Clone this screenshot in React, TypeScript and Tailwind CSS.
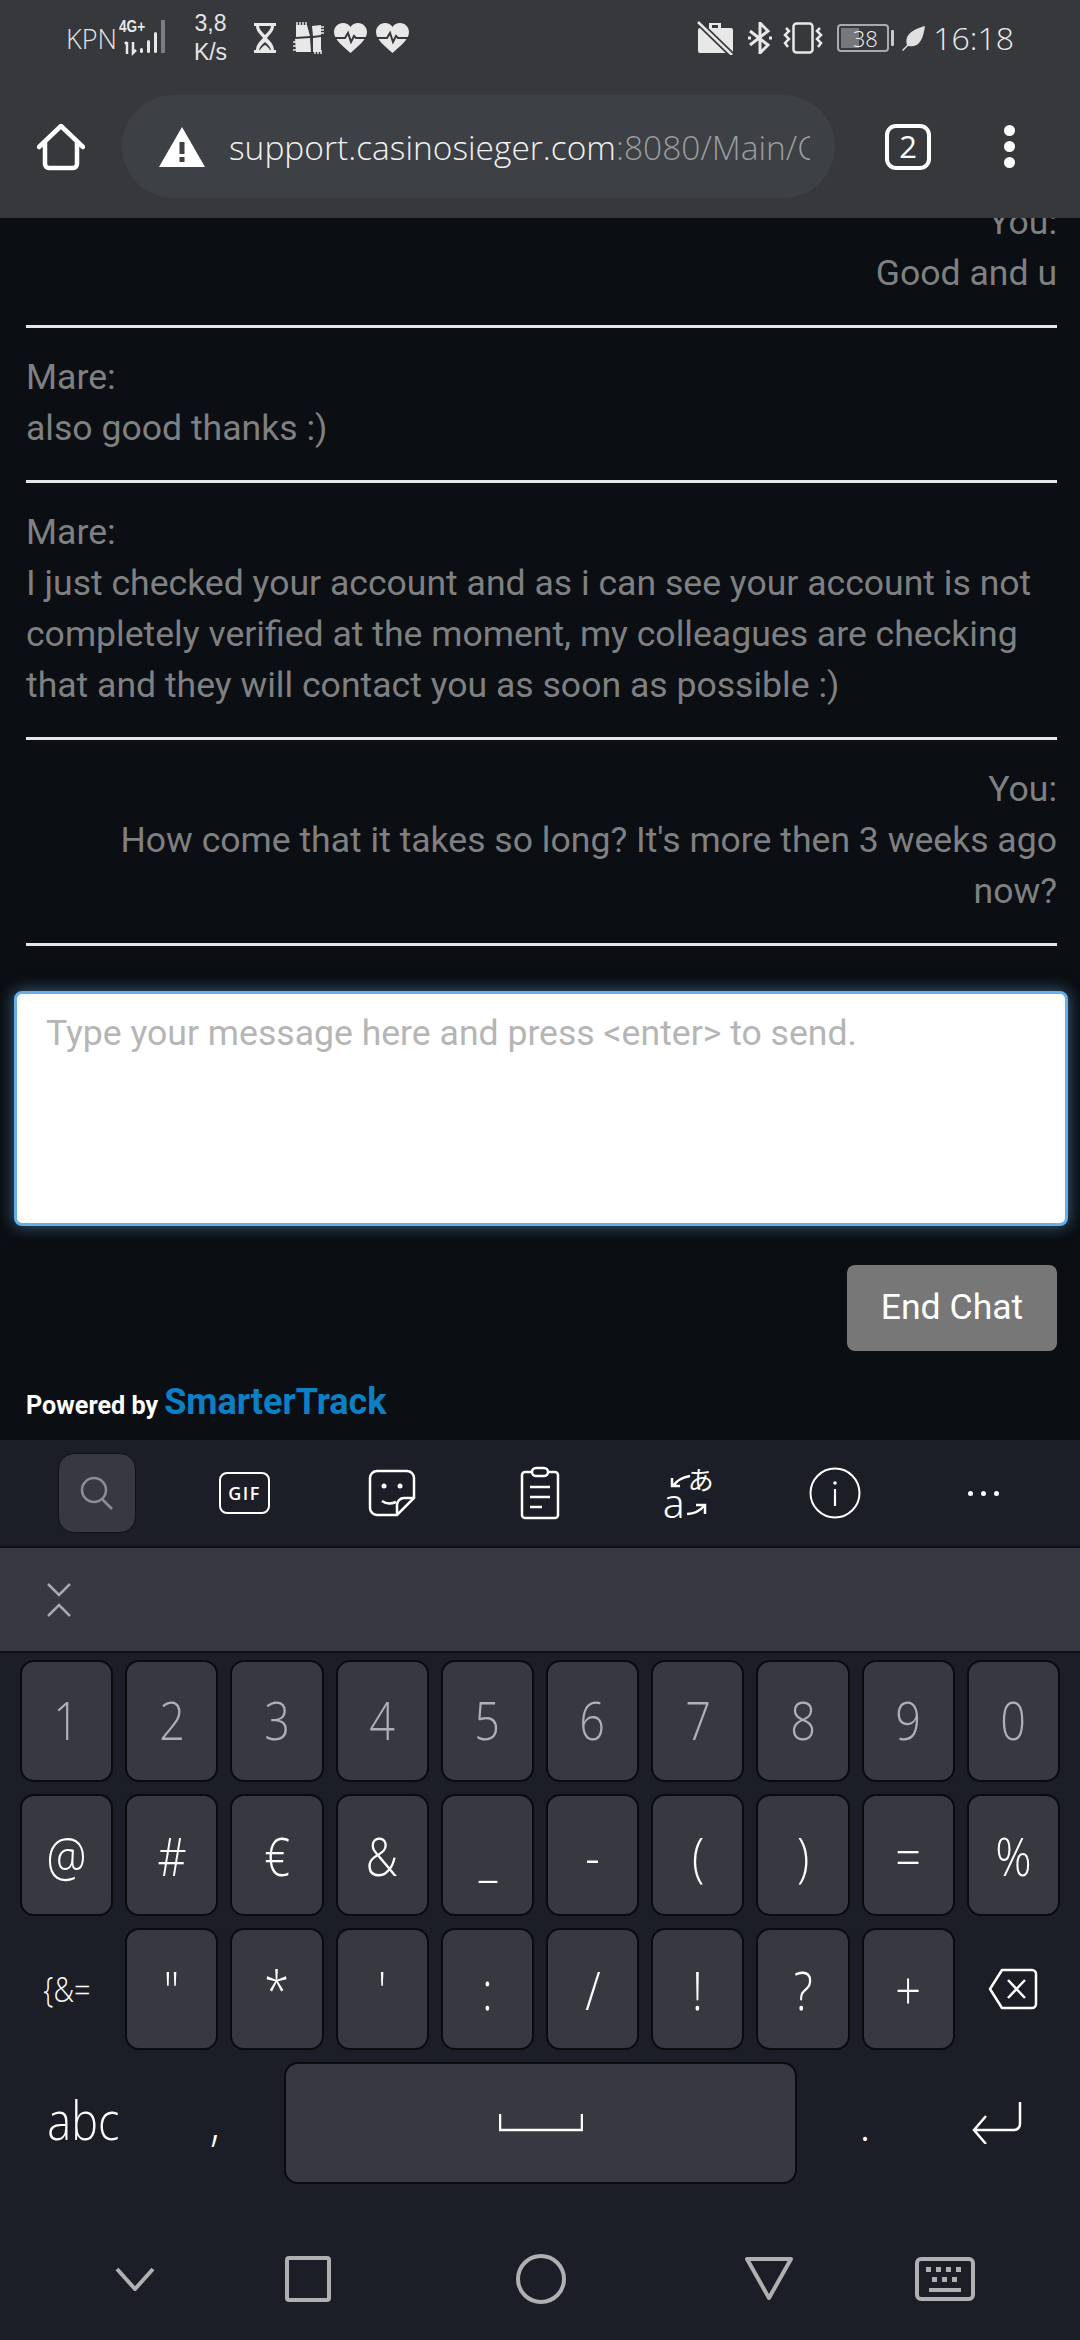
import React from "react"

const row1 = ["1", "2", "3", "4", "5", "6", "7", "8", "9", "0"]
const row2 = ["@", "#", "€", "&", "_", "-", "(", ")", "=", "%"]
const row3 = ['"', "*", "'", ":", "/", "!", "?", "+"]

function Hourglass() {
  return (
    <svg width="24" height="32" viewBox="0 0 24 32" className="ml-[24px]">
      <path d="M1 1h22v3h-2c0 5-4 8-7 12 3 3 7 7 7 12h2v3H1v-3h2c0-5 4-9 7-12C7 12 3 9 3 4H1z" fill="#e8e8e8" />
      <path d="M6 4h12c0 3-3 6-6 9-3-3-6-6-6-9zM12 20c2 2 5 4 6 8H6c1-4 4-6 6-8z" fill="#37383c" />
      <path d="M12 23c2 1 4 3 5 5H7c1-2 3-4 5-5z" fill="#e8e8e8" />
    </svg>
  )
}

function Patchwork() {
  return (
    <svg width="31" height="32" viewBox="0 0 31 32" className="ml-[16px]">
      <path d="M3 3h11l3 11-14 1zM19 4l9-1v10l-8 1zM2 17l15-1 1 14H3zM20 16l8-1v15h-8z" fill="#e8e8e8" />
      <path d="M4 0v3M7 0v3M10 0v3M13 0v3M27 5h4M27 8h4M27 11h4M22 28v4M25 28v4M28 28v4M0 20h3M0 24h3M0 28h3" stroke="#e8e8e8" strokeWidth="1.500" />
    </svg>
  )
}

function Heart({ first }: { first?: boolean }) {
  return (
    <svg width="33" height="30" viewBox="0 0 33 30" className={first ? "ml-[10px]" : "ml-[9px]"}>
      <path d="M16.500 30C10 24 0 17 0 9c0-5 4-9 9-9 3 0 6 1.500 7.500 4C18 1.500 21 0 24 0c5 0 9 4 9 9 0 8-10 15-16.500 21z" fill="#e8e8e8" />
      <path d="M0 15h11l3-5 3 9 3-6 2 2h11" fill="none" stroke="#37383c" strokeWidth="2" />
    </svg>
  )
}

function StatusLeft() {
  return (
    <div className="flex items-center pl-[66px]">
      <span className="font-['Open_Sans',sans-serif] font-light text-[27px] leading-none text-[#e4e4e4] w-[52px]">KPN</span>
      <div className="relative w-[56px] h-[36px]">
        <span className="absolute left-[1px] -top-[2px] origin-left scale-x-[0.8] font-['Liberation_Sans',sans-serif] font-bold text-[17px] leading-[17px] text-[#e8e8e8]">4G+</span>
        <svg width="56" height="36" viewBox="0 0 56 36" className="absolute left-0 top-0">
          <path d="M9 22v12M7 24l2-2" stroke="#e8e8e8" strokeWidth="2.500" fill="none" />
          <path d="M15 22v11l3-3" stroke="#e8e8e8" strokeWidth="2.500" fill="none" />
          <rect x="22" y="28" width="3" height="5" rx="1.500" fill="#e8e8e8" />
          <rect x="29" y="20" width="3" height="13" rx="1.500" fill="#e8e8e8" />
          <rect x="36" y="12" width="3" height="21" rx="1.500" fill="#e8e8e8" />
          <rect x="43" y="0" width="4" height="33" fill="#7b7c80" />
        </svg>
      </div>
      <div className="ml-[18px] w-[37px] flex flex-col items-center font-['Liberation_Sans',sans-serif] text-[23px] leading-[29px] text-[#e4e4e4]">
        <span>3,8</span>
        <span>K/s</span>
      </div>
      <Hourglass />
      <Patchwork />
      <Heart first />
      <Heart />
    </div>
  )
}

function StatusRight() {
  return (
    <div className="flex items-center pr-[66px]">
      <svg width="37" height="34" viewBox="0 0 37 34">
        <path d="M12 7V2h12v5h10a2 2 0 0 1 2 2v23H3a2 2 0 0 1-2-2V9a2 2 0 0 1 2-2z" fill="#e8e8e8" />
        <path d="M15 7V4h6v3z" fill="#37383c" />
        <path d="M1 1l34 33" stroke="#37383c" strokeWidth="6" />
        <path d="M1 1l34 33" stroke="#e8e8e8" strokeWidth="2.500" />
      </svg>
      <svg width="26" height="32" viewBox="0 0 26 32" className="ml-[13px]">
        <path d="M3 9l18 14-8 8V1l8 8L3 23" fill="none" stroke="#e8e8e8" strokeWidth="3" />
        <path d="M1 16h3M22 16h3" stroke="#e8e8e8" strokeWidth="3" />
      </svg>
      <svg width="40" height="32" viewBox="0 0 40 32" className="ml-[10px]">
        <rect x="10.500" y="1.500" width="19" height="29" rx="3" fill="none" stroke="#e8e8e8" strokeWidth="2.500" />
        <path d="M3 6l3 3-4 4 4 4-4 4 3 4M37 6l-3 3 4 4-4 4 4 4-3 4" fill="none" stroke="#e8e8e8" strokeWidth="2.500" />
      </svg>
      <div className="ml-[14px] relative w-[52px] h-[28px] rounded-[4px] border-2 border-[#a9aaac] flex items-center justify-center overflow-hidden">
        <div className="absolute left-[2px] top-[2px] bottom-[2px] w-[18px] bg-[#77787b]"></div>
        <span className="relative font-['Open_Sans',sans-serif] font-light text-[22px] leading-none text-[#f0f0f0] pl-[4px]">38</span>
      </div>
      <div className="ml-[2px] w-[3px] h-[16px] rounded-[1px] bg-[#c9c9c9]"></div>
      <svg width="23" height="25" viewBox="0 0 23 25" className="ml-[8px]">
        <path d="M23 0C21 14 17 22 6 20L1 25 0 24l5-5C2 8 12 3 23 0z" fill="#e0e0e0" />
      </svg>
      <span className="ml-[8px] font-['Open_Sans',sans-serif] font-light text-[32px] leading-none text-[#ececec]">16:18</span>
    </div>
  )
}

function BrowserBar() {
  return (
    <div className="flex items-center h-[103px]">
      <svg width="48" height="48" viewBox="0 0 48 48" className="ml-[37px]">
        <path d="M2 24L24 3l22 21M8 19v22a4 4 0 0 0 4 4h24a4 4 0 0 0 4-4V19" fill="none" stroke="#fff" strokeWidth="4.500" strokeLinejoin="round" strokeLinecap="round" />
      </svg>
      <div className="ml-[37px] w-[713px] h-[103px] rounded-full bg-[#3d4044] flex items-center pl-[37px]">
        <svg width="46" height="40" viewBox="0 0 46 40">
          <path d="M23 0l23 40H0z" fill="#fff" />
          <path d="M20.500 15h5v12h-5zM20.500 30h5v5h-5z" fill="#3d4044" />
        </svg>
        <div className="ml-[24px] w-[581px] overflow-hidden whitespace-nowrap font-['Open_Sans',sans-serif] text-[33.5px] leading-[50px] font-light text-[#f2f2f2]">
          support.casinosieger.com<span className="text-[#9a9c9e]">:8080/Main/Chat</span>
        </div>
      </div>
      <div className="ml-[50px] w-[46px] h-[46px] rounded-[11px] border-[4px] border-white flex items-center justify-center font-['Open_Sans',sans-serif] text-[31px] leading-none text-white">2</div>
      <div className="ml-[73px] flex flex-col gap-[5px]">
        <div className="w-[11px] h-[11px] rounded-full bg-white"></div>
        <div className="w-[11px] h-[11px] rounded-full bg-white"></div>
        <div className="w-[11px] h-[11px] rounded-full bg-white"></div>
      </div>
    </div>
  )
}

function Message({ you, children }: { you?: boolean; children: React.ReactNode }) {
  return (
    <div className={you ? "pl-[80px] pb-[26px] border-b-[3px] border-[#e6e6e6] mb-[24px] text-right" : "pb-[26px] border-b-[3px] border-[#e6e6e6] mb-[24px]"}>
      {children}
    </div>
  )
}

function Chat() {
  return (
    <div className="relative h-[1222px] overflow-hidden bg-[#0b0e12] font-['Roboto',sans-serif]">
      <div className="pl-[26px] pr-[23px] -mt-[21px] text-[35.6px] leading-[51px] text-[#7f8082]">
        <Message you>
          <div>You:</div>
          <div>Good and u</div>
        </Message>
        <Message>
          <div>Mare:</div>
          <div>also good thanks :)</div>
        </Message>
        <Message>
          <div>Mare:</div>
          <div>I just checked your account and as i can see your account is not completely verified at the moment, my colleagues are checking that and they will contact you as soon as possible :)</div>
        </Message>
        <Message you>
          <div>You:</div>
          <div>How come that it takes so long? It's more then 3 weeks ago now?</div>
        </Message>
      </div>
      <textarea
        readOnly
        placeholder="Type your message here and press <enter> to send."
        className="block mx-[14px] mt-[45px] w-[1054px] h-[235px] resize-none rounded-[8px] border-[3px] border-[#66afe9] bg-white px-[29px] py-[14px] text-[35.6px] leading-[51px] placeholder:text-[#b5b5b5] shadow-[0_0_16px_rgba(102,175,233,0.55)] outline-none"
      />
      <div className="flex justify-end pr-[23px] mt-[39px]">
        <div className="w-[210px] h-[86px] rounded-[8px] bg-[#777777] flex items-center justify-center text-[35.6px] text-white">End Chat</div>
      </div>
      <div className="flex items-baseline pl-[26px] mt-[24px]">
        <span className="text-[25.2px] font-bold text-white">Powered by</span>
        <span className="ml-[6px] text-[36px] font-bold text-[#0c80c5]">SmarterTrack</span>
      </div>
    </div>
  )
}

function Toolbar() {
  const stroke = "#ffffff"
  return (
    <div className="grid grid-cols-7 h-[108px] px-[23px] items-center justify-items-center bg-[#1b1e27] border-b-[2px] border-[#0e0f14]">
      <div className="w-[78px] h-[80px] rounded-[16px] border border-[#101116] bg-[#383940] flex items-center justify-center">
        <svg width="34" height="34" viewBox="0 0 34 34">
          <circle cx="14" cy="14" r="12" fill="none" stroke="#8d8e93" strokeWidth="2.500" />
          <path d="M22 23l10 10" stroke="#8d8e93" strokeWidth="2.500" />
        </svg>
      </div>
      <div className="w-[51px] h-[42px] rounded-[8px] border-[2.5px] border-white flex items-center justify-center font-['Open_Sans',sans-serif] font-semibold text-[18px] tracking-[1.5px] leading-none text-white">GIF</div>
      <svg width="48" height="48" viewBox="0 0 48 48">
        <path d="M29 46H9a7 7 0 0 1-7-7V9a7 7 0 0 1 7-7h30a7 7 0 0 1 7 7v20z" fill="none" stroke={stroke} strokeWidth="2.500" />
        <path d="M29 46V36a7 7 0 0 1 7-7h10" fill="none" stroke={stroke} strokeWidth="2.500" />
        <circle cx="16" cy="17" r="2.500" fill={stroke} />
        <circle cx="32" cy="17" r="2.500" fill={stroke} />
        <path d="M14 32c4 3 9 3 14 1" fill="none" stroke={stroke} strokeWidth="2.500" />
      </svg>
      <svg width="40" height="54" viewBox="0 0 40 54">
        <path d="M12 6H5a3 3 0 0 0-3 3v40a3 3 0 0 0 3 3h30a3 3 0 0 0 3-3V9a3 3 0 0 0-3-3h-7" fill="none" stroke={stroke} strokeWidth="2.500" />
        <rect x="12" y="2" width="16" height="8" rx="4" fill="none" stroke={stroke} strokeWidth="2.500" />
        <path d="M10 21h20M10 31h20M10 41h12" stroke={stroke} strokeWidth="2.500" />
      </svg>
      <div className="relative w-[52px] h-[52px] text-white">
        <span className="absolute right-[0px] -top-[4px] font-['Noto_Sans_CJK_JP',sans-serif] text-[26px] leading-[32px]">あ</span>
        <span className="absolute left-[1px] bottom-[-4px] text-[41px] leading-[41px] font-['Noto_Sans',sans-serif] font-light">a</span>
        <svg width="52" height="52" viewBox="0 0 52 52" className="absolute left-0 top-0">
          <path d="M28 9c-6 1-13 4-17 10M10 11v8h8M25 47c7 0 13-3 18-9M34 38h9v9" fill="none" stroke={stroke} strokeWidth="2.500" />
        </svg>
      </div>
      <svg width="52" height="52" viewBox="0 0 52 52">
        <circle cx="26" cy="26" r="24.500" fill="none" stroke={stroke} strokeWidth="2" />
        <circle cx="26" cy="16" r="1.800" fill={stroke} />
        <path d="M26 22v17" stroke={stroke} strokeWidth="2.200" />
      </svg>
      <div className="flex gap-[8px]">
        <div className="w-[5px] h-[5px] rounded-full bg-white"></div>
        <div className="w-[5px] h-[5px] rounded-full bg-white"></div>
        <div className="w-[5px] h-[5px] rounded-full bg-white"></div>
      </div>
    </div>
  )
}

function Key({ label, dim }: { label: string; dim?: boolean }) {
  return (
    <div className={dim
      ? "h-[122px] pb-[4px] rounded-[14px] border-2 border-[#0a0b0f] bg-[#383940] flex items-center justify-center font-['Open_Sans',sans-serif] font-light text-[53px] leading-none text-[#aeb0b4]"
      : "h-[122px] rounded-[14px] border-2 border-[#0a0b0f] bg-[#383940] flex items-center justify-center font-['Open_Sans',sans-serif] font-light text-[53px] leading-none text-white"}>
      <span className="inline-block scale-x-[0.85]">{label}</span>
    </div>
  )
}

function Keys() {
  return (
    <div className="px-[20px] pt-[7px] flex flex-col gap-[12px]">
      <div className="grid grid-cols-10 gap-[12px]">
        {row1.map((k) => <Key key={k} label={k} dim />)}
      </div>
      <div className="grid grid-cols-10 gap-[12px]">
        {row2.map((k) => <Key key={k} label={k} />)}
      </div>
      <div className="grid grid-cols-10 gap-[12px]">
        <div className="flex items-center justify-center font-['Open_Sans',sans-serif] font-light text-[34px] leading-none text-white">
          <span className="inline-block scale-x-[0.85]">{"{&="}</span>
        </div>
        {row3.map((k) => <Key key={k} label={k} />)}
        <div className="flex items-center justify-center">
          <svg width="50" height="42" viewBox="0 0 50 42">
            <path d="M14 2h30a4 4 0 0 1 4 4v30a4 4 0 0 1-4 4H14L2 21z" fill="none" stroke="#fff" strokeWidth="2.500" strokeLinejoin="round" />
            <path d="M20 12l17 18M37 12L20 30" stroke="#fff" strokeWidth="2.500" />
          </svg>
        </div>
      </div>
      <div className="flex h-[122px] font-['Open_Sans',sans-serif] font-light text-white">
        <div className="w-[126px] pb-[8px] flex items-center justify-center text-[53px] leading-none">
          <span className="inline-block scale-x-[0.85]">abc</span>
        </div>
        <div className="w-[138px] flex items-center justify-center text-[48px] leading-none">,</div>
        <div className="w-[513px] rounded-[14px] border-2 border-[#0a0b0f] bg-[#383940] flex items-center justify-center">
          <svg width="84" height="18" viewBox="0 0 84 18">
            <path d="M1 0v16h82V0" fill="none" stroke="#fff" strokeWidth="2.500" />
          </svg>
        </div>
        <div className="w-[136px] flex items-center justify-center text-[48px] leading-none">.</div>
        <div className="flex-1 flex items-center justify-center">
          <svg width="50" height="42" viewBox="0 0 50 42">
            <path d="M48 0v22a6 6 0 0 1-6 6H3M14 14L2 28l12 14" fill="none" stroke="#fff" strokeWidth="2.500" />
          </svg>
        </div>
      </div>
    </div>
  )
}

function NavBar() {
  const c = "#b0b0b0"
  return (
    <div className="flex items-center h-[155px] pt-[35px]">
      <svg width="40" height="24" viewBox="0 0 40 24" className="ml-[115px]">
        <path d="M2 2l18 20L38 2" fill="none" stroke={c} strokeWidth="4" />
      </svg>
      <svg width="46" height="46" viewBox="0 0 46 46" className="ml-[130px]">
        <rect x="2" y="2" width="42" height="42" rx="2" fill="none" stroke={c} strokeWidth="4" />
      </svg>
      <svg width="50" height="50" viewBox="0 0 50 50" className="ml-[185px]">
        <circle cx="25" cy="25" r="23" fill="none" stroke={c} strokeWidth="4" />
      </svg>
      <svg width="50" height="46" viewBox="0 0 50 46" className="ml-[178px]">
        <path d="M3 3h44L25 42z" fill="none" stroke={c} strokeWidth="4" strokeLinejoin="round" />
      </svg>
      <svg width="60" height="44" viewBox="0 0 60 44" className="ml-[121px]">
        <rect x="2" y="2" width="56" height="40" rx="4" fill="none" stroke={c} strokeWidth="4" />
        <path d="M11 10h5v5h-5zM21 10h5v5h-5zM31 10h5v5h-5zM41 10h5v5h-5zM17 20h5v5h-5zM27 20h5v5h-5zM37 20h5v5h-5zM14 31h32v4H14z" fill={c} />
      </svg>
    </div>
  )
}

export default function App() {
  return (
    <div className="w-[1080px] h-[2340px] overflow-hidden bg-[#1b1e27]">
      <div className="h-[218px] bg-[#37383c]">
        <div className="h-[76px] flex items-center justify-between">
          <StatusLeft />
          <StatusRight />
        </div>
        <div className="pt-[19px]">
          <BrowserBar />
        </div>
      </div>
      <Chat />
      <Toolbar />
      <div className="h-[105px] bg-[#383940] border-b-[2px] border-[#0e0f14] flex items-center pl-[46px]">
        <svg width="26" height="38" viewBox="0 0 26 38">
          <path d="M2 3l11 11L24 3M2 35l11-11 11 11" fill="none" stroke="#a8a9ad" strokeWidth="2.500" />
        </svg>
      </div>
      <Keys />
      <NavBar />
    </div>
  )
}
